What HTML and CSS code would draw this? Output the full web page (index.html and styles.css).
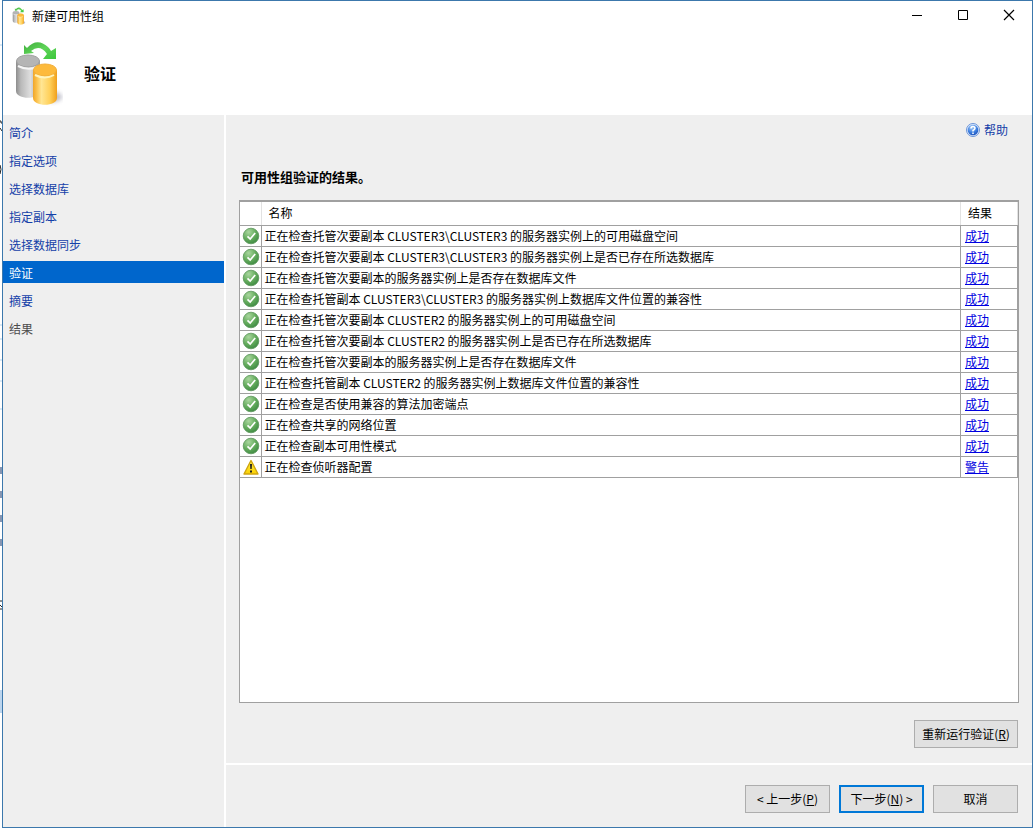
FILE: index.html
```html
<!DOCTYPE html>
<html lang="zh-CN">
<head>
<meta charset="utf-8">
<title>新建可用性组</title>
<link rel="stylesheet" href="styles.css">
</head>
<body>
<svg class="backdrop" width="2" height="831" viewBox="0 0 2 831" aria-hidden="true">
  <path d="M0 45h2M0 325h2M0 339h2M0 360h2M0 381h2M0 409h2" stroke="#b5d3ec"/>
  <path d="M0 121h1v2h1M0 128l2 3M0 165q2 4 0 9M0 601h2M0 605l2 2M0 609h2" fill="none" stroke="#222"/>
  <path d="M0 467h2v7h-2zM0 491h2v7h-2zM0 515h2v7h-2zM0 539h2v7h-2z" fill="#8796b2"/>
  <path d="M0 690h2v23h-2z" fill="#bcd5ee"/>
</svg>
<div class="window">
  <svg class="defs" width="0" height="0" aria-hidden="true">
    <defs>
      <linearGradient id="silver"><stop offset="0" stop-color="#8d8d8d"/><stop offset=".2" stop-color="#b9b9b9"/><stop offset=".6" stop-color="#dedede"/><stop offset="1" stop-color="#a0a0a0"/></linearGradient>
      <linearGradient id="gold"><stop offset="0" stop-color="#f0a62a"/><stop offset=".15" stop-color="#fbc04a"/><stop offset=".35" stop-color="#ffe694"/><stop offset=".7" stop-color="#ffd05a"/><stop offset="1" stop-color="#f0a01c"/></linearGradient>
      <linearGradient id="leaf" x1="0" y1="0" x2="1" y2="1"><stop offset="0" stop-color="#3fae3c"/><stop offset=".5" stop-color="#5fd458"/><stop offset="1" stop-color="#3cc63c"/></linearGradient>
      <radialGradient id="green" cx=".35" cy=".25" r=".8"><stop offset="0" stop-color="#a9d69e"/><stop offset=".55" stop-color="#66ad5e"/><stop offset="1" stop-color="#3d8a42"/></radialGradient>
      <radialGradient id="blue" cx=".4" cy=".25" r=".8"><stop offset="0" stop-color="#a9cdf8"/><stop offset=".6" stop-color="#3c7fe0"/><stop offset="1" stop-color="#1c4fb8"/></radialGradient>
      <linearGradient id="amber" x2="0" y2="1"><stop offset="0" stop-color="#fff04a"/><stop offset="1" stop-color="#fbd000"/></linearGradient>
      <filter id="soft" x="-30%" y="-60%" width="160%" height="220%"><feGaussianBlur stdDeviation="2"/></filter>
      <symbol id="databases" viewBox="0 0 48 66">
        <ellipse cx="38" cy="57" rx="9" ry="5" fill="#a4a4b4" opacity=".7" filter="url(#soft)"/>
        <path d="M1 21v30c0 9 24 9 24 0V21z" fill="url(#silver)"/>
        <ellipse cx="13" cy="21" rx="11.500" ry="6" fill="#b5b5b5" stroke="#a0a0a0"/>
        <path d="M3 26q10 5 19 1" fill="none" stroke="#f6f6f6" stroke-width="2"/>
        <path d="M18 30v28c0 9 24 9 24 0V30z" fill="url(#gold)"/>
        <ellipse cx="30" cy="30" rx="11.500" ry="6" fill="#fdba3c" stroke="#f2ae38"/>
        <path d="M20 35q10 5 19 0" fill="none" stroke="#fff4bd" stroke-width="2"/>
        <path d="M9 5l3 3Q22-3 33 7q2 2 3 4l5-3v11H28l4-5Q25 4 16 11l3 2-10 1z" fill="url(#leaf)"/>
      </symbol>
      <symbol id="ok" viewBox="0 0 18 18">
        <circle cx="9" cy="9" r="7.800" fill="url(#green)" stroke="#5c955a" stroke-width=".8"/>
        <path d="M5.500 9.300l2.700 2.700 5-6" fill="none" stroke="#fff" stroke-width="1.700"/>
      </symbol>
      <symbol id="warn" viewBox="0 0 18 18">
        <path d="M9 2.500l7 13.500H2z" fill="url(#amber)" stroke="#cfa510" stroke-width="1.400" stroke-linejoin="round"/>
        <path d="M8 6h2l-.3 5H8.300zM8 12.500h2v2H8z" fill="#222"/>
      </symbol>
    </defs>
  </svg>
  <header class="titlebar">
    <svg class="app-icon" aria-hidden="true"><use href="#databases"/></svg>
    <span class="title">新建可用性组</span>
    <button class="caption" aria-label="最小化"><svg width="12" height="12"><path d="M1 6.500h10" stroke="#000"/></svg></button>
    <button class="caption" aria-label="最大化"><svg width="12" height="12"><path d="M1.500 1.500h9v9h-9z" fill="none" stroke="#000"/></svg></button>
    <button class="caption" aria-label="关闭"><svg width="12" height="12"><path d="M1 1l10 10M11 1L1 11" stroke="#000" stroke-width="1.200"/></svg></button>
  </header>
  <div class="banner">
    <svg class="banner-icon" aria-hidden="true"><use href="#databases"/></svg>
    <h1>验证</h1>
  </div>
  <div class="body">
    <nav class="steps">
      <a href="#">简介</a>
      <a href="#">指定选项</a>
      <a href="#">选择数据库</a>
      <a href="#">指定副本</a>
      <a href="#">选择数据同步</a>
      <a href="#" class="current" aria-current="step">验证</a>
      <a href="#">摘要</a>
      <span>结果</span>
    </nav>
    <main class="content">
      <section class="page">
        <a class="help" href="#"><svg width="14" height="14" viewBox="0 0 14 14" aria-hidden="true"><circle cx="7" cy="7" r="6.500" fill="#dce9fb" stroke="#6c94d8"/><circle cx="7" cy="7" r="5.300" fill="url(#blue)"/><path d="M5 5.500Q5 3.500 7 3.500t2 1.800Q9 6.300 7 7.500v1M7 9.500v1.600" fill="none" stroke="#fff" stroke-width="1.500"/></svg>帮助</a>
        <h2>可用性组验证的结果。</h2>
        <div class="results">
          <table>
            <thead><tr><th class="icon"></th><th class="name">名称</th><th class="result">结果</th></tr></thead>
            <tbody>
              <tr><td><svg><use href="#ok"/></svg></td><td>正在检查托管次要副本 CLUSTER3\CLUSTER3 的服务器实例上的可用磁盘空间</td><td><a href="#">成功</a></td></tr>
              <tr><td><svg><use href="#ok"/></svg></td><td>正在检查托管次要副本 CLUSTER3\CLUSTER3 的服务器实例上是否已存在所选数据库</td><td><a href="#">成功</a></td></tr>
              <tr><td><svg><use href="#ok"/></svg></td><td>正在检查托管次要副本的服务器实例上是否存在数据库文件</td><td><a href="#">成功</a></td></tr>
              <tr><td><svg><use href="#ok"/></svg></td><td>正在检查托管副本 CLUSTER3\CLUSTER3 的服务器实例上数据库文件位置的兼容性</td><td><a href="#">成功</a></td></tr>
              <tr><td><svg><use href="#ok"/></svg></td><td>正在检查托管次要副本 CLUSTER2 的服务器实例上的可用磁盘空间</td><td><a href="#">成功</a></td></tr>
              <tr><td><svg><use href="#ok"/></svg></td><td>正在检查托管次要副本 CLUSTER2 的服务器实例上是否已存在所选数据库</td><td><a href="#">成功</a></td></tr>
              <tr><td><svg><use href="#ok"/></svg></td><td>正在检查托管次要副本的服务器实例上是否存在数据库文件</td><td><a href="#">成功</a></td></tr>
              <tr><td><svg><use href="#ok"/></svg></td><td>正在检查托管副本 CLUSTER2 的服务器实例上数据库文件位置的兼容性</td><td><a href="#">成功</a></td></tr>
              <tr><td><svg><use href="#ok"/></svg></td><td>正在检查是否使用兼容的算法加密端点</td><td><a href="#">成功</a></td></tr>
              <tr><td><svg><use href="#ok"/></svg></td><td>正在检查共享的网络位置</td><td><a href="#">成功</a></td></tr>
              <tr><td><svg><use href="#ok"/></svg></td><td>正在检查副本可用性模式</td><td><a href="#">成功</a></td></tr>
              <tr><td><svg><use href="#warn"/></svg></td><td>正在检查侦听器配置</td><td><a href="#">警告</a></td></tr>
            </tbody>
          </table>
        </div>
        <button class="btn rerun">重新运行验证(<u>R</u>)</button>
      </section>
      <footer class="actions">
        <button class="btn">&lt; 上一步(<u>P</u>)</button>
        <button class="btn primary">下一步(<u>N</u>) &gt;</button>
        <button class="btn">取消</button>
      </footer>
    </main>
  </div>
</div>
</body>
</html>
```

FILE: styles.css
```css
* { box-sizing: border-box; }

body {
  margin: 0;
  padding: 0 3px 3px 2px;
  min-height: 100vh;
  display: flex;
  background: #fff;
  color: #000;
  font: 12px/20px "Noto Sans CJK SC", "Noto Sans", sans-serif;
}

.backdrop { position: absolute; left: 0; top: 0; }
.defs { position: absolute; }

.window {
  flex: 1;
  min-width: 0;
  display: flex;
  flex-direction: column;
  border: 1px solid #3c78ac;
  background: #fff;
}

.titlebar { display: flex; align-items: center; height: 30px; padding-left: 8px; }
.app-icon { width: 16px; height: 18px; }
.title { flex: 1; margin-left: 5px; }
.caption {
  align-self: flex-start;
  width: 46px;
  height: 28px;
  padding: 0;
  border: 0;
  background: none;
  display: flex;
  align-items: center;
  justify-content: center;
}

.banner { display: flex; align-items: center; height: 84px; padding-left: 12px; gap: 21px; }
.banner-icon { width: 48px; height: 66px; }
h1 { margin: 0; font-size: 16px; line-height: 24px; font-weight: 700; }

.body { flex: 1; display: flex; gap: 2px; }

.steps {
  width: 221px;
  padding-top: 6px;
  display: flex;
  flex-direction: column;
  gap: 6px;
  background: #efefef;
}
.steps a, .steps span { padding: 1px 6px 0; line-height: 21px; color: #1440a8; text-decoration: none; }
.steps span { color: #4d4d4d; }
.steps .current { background: #0066cc; color: #fff; }

.content { flex: 1; min-width: 0; display: flex; flex-direction: column; gap: 2px; }

.page {
  flex: 1;
  display: flex;
  flex-direction: column;
  padding: 5px 13px 15px 13px;
  background: #efefef;
}
.help {
  align-self: flex-end;
  margin-right: 11px;
  display: flex;
  align-items: center;
  gap: 4px;
  color: #1440a8;
  text-decoration: none;
}
h2 { margin: 27px 0 13px 2px; font-size: 13px; line-height: 20px; font-weight: 700; }

.results {
  flex: 1;
  border: 1px solid #a0a0a0;
  border-top-width: 2px;
  background: #fff;
}
table { width: 100%; border-collapse: collapse; table-layout: fixed; }
th, td {
  height: 21px;
  padding: 0 3px;
  border: 1px solid #a0a0a0;
  line-height: 20px;
  font-weight: 400;
  text-align: left;
  white-space: nowrap;
}
th { height: 23px; padding-left: 7px; border-top: 0; border-right-color: #e2e2e2; border-left-color: #e2e2e2; }
th:first-child, td:first-child { border-left: 0; }
td:first-child { padding: 0 1px 0 2px; }
td:last-child { padding-left: 4px; }
td svg { display: block; width: 18px; height: 18px; }
th.icon { width: 21px; }
th.result { width: 57px; }
td a { color: #0000e0; }

.btn {
  min-width: 85px;
  height: 28px;
  padding: 0 6px;
  border: 1px solid #adadad;
  background: #e1e1e1;
  color: #000;
  font: inherit;
}
.rerun { align-self: flex-end; min-width: 104px; margin: 17px 1px 0 0; }
.primary { border: 2px solid #0078d7; }

.actions {
  display: flex;
  justify-content: flex-end;
  gap: 9px;
  padding: 20px 14px 14px;
  background: #efefef;
}
```
